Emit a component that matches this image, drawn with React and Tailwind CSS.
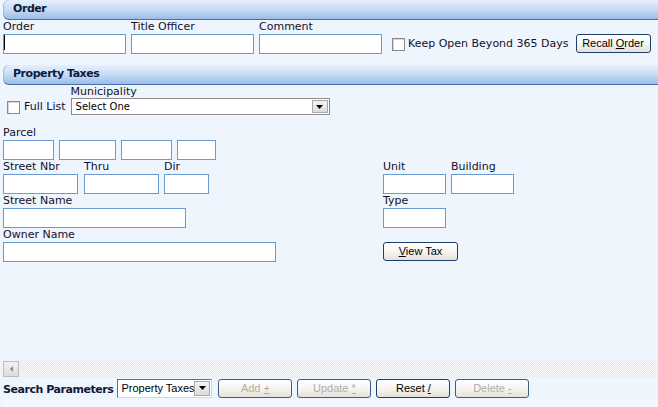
import React from 'react';

const font = { fontFamily: '"DejaVu Sans", Verdana, sans-serif' };
const arial = { fontFamily: '"Liberation Sans", Arial, sans-serif' };

function Header({ title }) {
    return (
        <div className="ml-[3px] h-[20px] flex items-center pl-[10px] rounded-l-[6px] border-b border-[#4671ad] bg-gradient-to-b from-[#e6f0fc] via-[#c6dbf5] to-[#9cbde8] shadow-[inset_1px_0_0_#9fbbe0]">
            <span className="font-bold text-[11px] tracking-[-0.45px] text-[#0b1a3a]">{title}</span>
        </div>
    );
}

function Field({ label, w, className = '' }) {
    return (
        <div className={`flex flex-col ${className}`}>
            <span className="h-[14px] leading-[14px] text-[11px] text-[#15102a] whitespace-nowrap">{label || '\u00a0'}</span>
            <div className={`h-[20px] border border-[#6b9bd2] bg-white ${w}`} />
        </div>
    );
}

function Btn({ children, w = 'w-[75px]', disabled }) {
    return (
        <button
            className={`h-[19px] ${w} rounded-[3px] border border-[#1d3f6e] bg-gradient-to-b from-white via-[#f6f5f0] to-[#e4e2d8] text-[11px] leading-none whitespace-nowrap ${disabled ? 'text-[#b0aea6] border-[#3d5c86]' : 'text-black'}`}
            style={arial}
        >
            {children}
        </button>
    );
}

function Check() {
    return <div className="w-[13px] h-[13px] border border-[#8a8a8a] bg-white shadow-[inset_1px_1px_0_#d8d8d8]" />;
}

function Arrow() {
    return (
        <div className="w-[16px] h-full flex items-center justify-center border border-[#a8a8a8] bg-gradient-to-b from-[#f4f4f4] to-[#dcdcdc]">
            <svg width="7" height="4" viewBox="0 0 7 4"><path d="M0 0h7L3.5 4z" fill="#000" /></svg>
        </div>
    );
}

export default function App() {
    return (
        <div className="w-[658px] h-[407px] bg-[#eef5fd] overflow-hidden relative text-[11px]" style={font}>
            <Header title="Order" />
            <div className="flex items-end px-[3px] gap-[5px]">
                <Field label="Order" w="w-[123px]" />
                <Field label="Title Officer" w="w-[123px]" />
                <Field label="Comment" w="w-[123px]" />
                <div className="flex items-center h-[20px] ml-[5px] gap-[2px]">
                    <Check />
                    <span className="ml-[1px] text-[#15102a] whitespace-nowrap">Keep Open Beyond 365 Days</span>
                </div>
                <div className="ml-[2px] mb-[1px]">
                    <Btn>Recall <u>O</u>rder</Btn>
                </div>
            </div>
            <div className="absolute left-[4px] top-[35px] w-px h-[15px] bg-black" />

            <div className="mt-[11px]">
                <Header title="Property Taxes" />
            </div>
            <div className="flex items-end px-[3px] mt-[1px]">
                <div className="flex items-center gap-[3px] pl-[4px] h-[17px] mb-[-1px]">
                    <Check />
                    <span className="text-[#15102a] ml-[1px]">Full List</span>
                </div>
                <div className="flex flex-col ml-[5px]">
                    <span className="h-[12px] leading-[12px] text-[#15102a]">Municipality</span>
                    <div className="w-[259px] h-[17px] flex items-stretch border border-[#8d8d8d] bg-white p-px">
                        <span className="flex-1 pl-[3px] leading-[13px] text-[10px] text-black">Select One</span>
                        <Arrow />
                    </div>
                </div>
            </div>

            <div className="px-[3px] mt-[11px]">
                <div className="flex gap-[5px]">
                    <Field label="Parcel" w="w-[51px]" />
                    <Field label="" w="w-[57px]" />
                    <Field label="" w="w-[51px]" />
                    <Field label="" w="w-[39px]" />
                </div>
                <div className="grid grid-cols-[380px_1fr]">
                    <div className="flex gap-[5px]">
                        <Field label="Street Nbr" w="w-[75px]" />
                        <Field label="Thru" w="w-[75px]" className="ml-px" />
                        <Field label="Dir" w="w-[45px]" />
                    </div>
                    <div className="flex gap-[5px]">
                        <Field label="Unit" w="w-[63px]" />
                        <Field label="Building" w="w-[63px]" />
                    </div>
                    <Field label="Street Name" w="w-[183px]" />
                    <Field label="Type" w="w-[63px]" />
                    <Field label="Owner Name" w="w-[273px]" />
                    <div className="pt-[14px]">
                        <Btn>
                            <u>V</u>iew Tax
                        </Btn>
                    </div>
                </div>
            </div>

            <div className="absolute left-[3px] right-0 top-[361px] h-[17px] bg-[repeating-conic-gradient(#e3e8ee_0_25%,#f7f9fb_0_50%)] bg-size-[2px_2px]">
                <div className="w-[16px] h-[16px] border border-[#b9bcc0] bg-gradient-to-b from-[#f3f3f3] to-[#dcdcdc] flex items-center justify-center">
                    <svg width="3" height="6" viewBox="0 0 3 6"><path d="M3 0v6L0 3z" fill="#8a8a8a" /></svg>
                </div>
            </div>

            <div className="absolute left-[3px] top-[378px] flex items-center">
                <span className="font-bold text-[#0b1a3a] text-[11px] tracking-[-0.45px] mt-[4px] whitespace-nowrap">Search Parameters</span>
                <div className="ml-[4px] w-[95px] h-[19px] flex items-stretch border border-[#6e6e6e] border-b-[#d6d6d6] border-r-[#d6d6d6] bg-white p-px">
                    <span className="flex-1 pl-[2px] leading-[14px] text-black whitespace-nowrap overflow-hidden" style={arial}>Property Taxes</span>
                    <Arrow />
                </div>
                <div className="flex gap-[5px] ml-[6px]">
                    <Btn w="w-[74px]" disabled>Add <u>+</u></Btn>
                    <Btn w="w-[74px]" disabled>Update <u>*</u></Btn>
                    <Btn w="w-[74px]">Reset <u>/</u></Btn>
                    <Btn w="w-[74px]" disabled>Delete <u>-</u></Btn>
                </div>
            </div>
            <div className="absolute left-[3px] right-0 top-[400px] bottom-0 bg-[#f3f8fd]" />
        </div>
    );
}
